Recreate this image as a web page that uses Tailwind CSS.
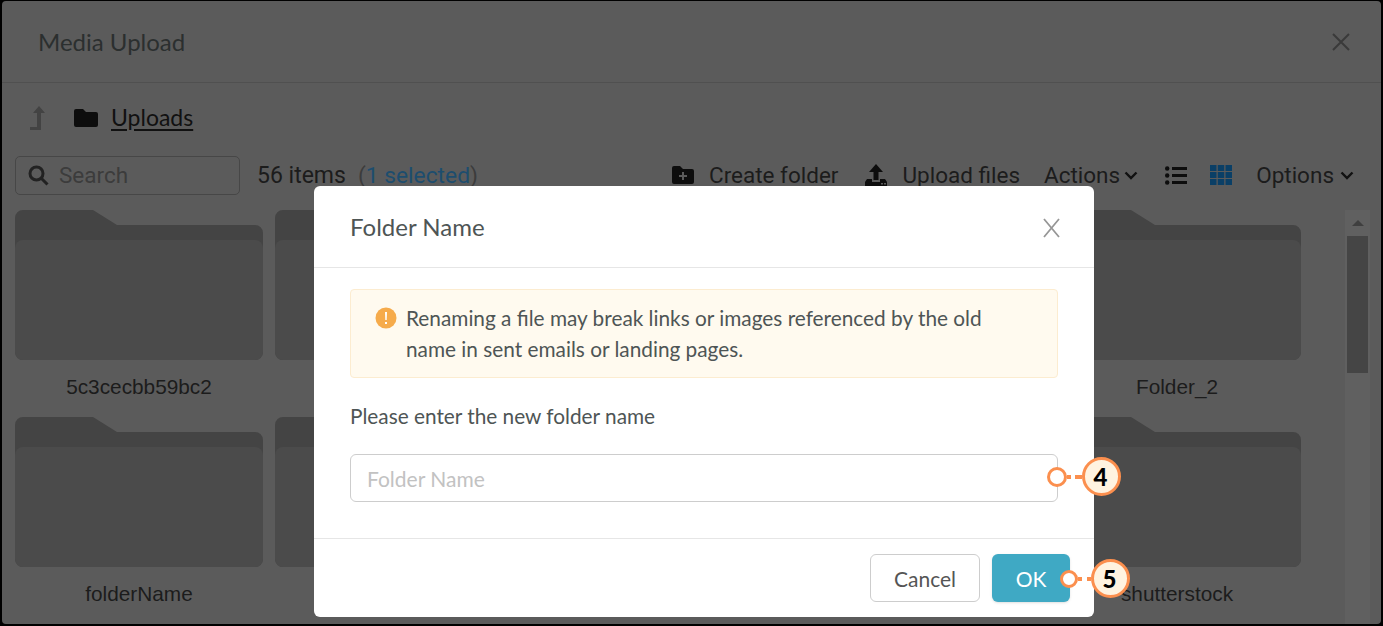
<!DOCTYPE html>
<html lang="en">
<head>
    <meta charset="UTF-8">
    <title>Folder Name</title>
    <script src="https://cdn.jsdelivr.net/npm/@tailwindcss/browser@4"></script>
</head>
<body class="bg-black overflow-hidden">
<div class="relative w-[1383px] h-[626px] overflow-hidden font-['Lato',sans-serif]">

    <!-- media upload window behind the overlay -->
    <div class="absolute inset-x-[2px] top-[1px] bottom-[2px] bg-[#5b5b5b] rounded-[4px] flex flex-col overflow-hidden">
        <div class="h-[82px] shrink-0 flex items-center justify-between pl-[36px] pr-[30px] border-b border-[#505050]">
            <span class="text-[24px] text-[#2b2f2f]">Media Upload</span>
            <svg class="w-[20px] h-[20px]" viewBox="0 0 20 20" fill="none" stroke="#3a3a3a" stroke-width="2"><path d="M2 2l16 16M18 2L2 18"/></svg>
        </div>

        <div class="h-[72px] shrink-0 flex items-center pl-[26px] pb-[2px]">
            <svg class="w-[18px] h-[24px]" viewBox="0 0 18 24" fill="#434343"><path d="M11 0l6 7h-4v17H2v-3h7V7H5z"/></svg>
            <svg class="w-[24px] h-[18px] ml-[28px]" viewBox="0 0 24 18" fill="#0d0d0d"><path d="M2 0h7l3 3h10a2 2 0 012 2v11a2 2 0 01-2 2H2a2 2 0 01-2-2V2a2 2 0 012-2z"/></svg>
            <span class="ml-[13px] -mt-[2px] text-[23px] text-[#111] underline underline-offset-[3px]">Uploads</span>
        </div>

        <div class="h-[40px] shrink-0 flex items-center pl-[13px] pr-[27px] font-['Roboto',sans-serif] text-[22.5px] text-[#1c1c1c]">
            <div class="w-[225px] h-[39px] rounded-[5px] border border-[#474747] flex items-center pl-[12px]">
                <svg class="w-[21px] h-[21px]" viewBox="0 0 21 21" fill="none" stroke="#222" stroke-width="3"><circle cx="8.5" cy="8.5" r="6.5"/><path d="M13.5 13.5l6 6"/></svg>
                <span class="ml-[10px] pt-[2px] text-[#3c3c3c]">Search</span>
            </div>
            <span class="ml-[17px] pt-[2px] text-[23px]">56 items</span>
            <span class="ml-[12px] pt-[2px] text-[22.8px] text-[#3c3c3c]">(<span class="text-[#1d4d6e]">1 selected</span>)</span>
            <div class="ml-auto flex items-center">
                <svg class="w-[22px] h-[18px]" viewBox="0 0 22 18" fill="#0d0d0d"><path d="M2 0h6l3 3h9a2 2 0 012 2v11a2 2 0 01-2 2H2a2 2 0 01-2-2V2a2 2 0 012-2z"/><path d="M10 6h2v3h3v2h-3v3h-2v-3H7V9h3z" fill="#5b5b5b"/></svg>
                <span class="ml-[15px] pt-[2px]">Create folder</span>
                <svg class="w-[22px] h-[22px] ml-[27px]" viewBox="0 0 22 22" fill="#0d0d0d"><path d="M11 0l7 8h-4.500v8h-5V8H4z"/><path d="M0 22v-4l2-3h5v3h8v-3h5l2 3v4z"/><path d="M16 19h2v1.500h-2zM19 19h2v1.500h-2z" fill="#5b5b5b"/></svg>
                <span class="ml-[15px] pt-[2px]">Upload files</span>
                <span class="ml-[24px] pt-[2px]">Actions</span>
                <svg class="w-[14px] h-[9px] ml-[4px]" viewBox="0 0 14 9" fill="none" stroke="#111" stroke-width="2.4"><path d="M1.5 1.5L7 7l5.500-5.500"/></svg>
                <svg class="w-[22px] h-[19px] ml-[27px]" viewBox="0 0 22 19" fill="#0d0d0d"><circle cx="2.200" cy="2.500" r="2.200"/><circle cx="2.200" cy="9.500" r="2.200"/><circle cx="2.200" cy="16.500" r="2.200"/><path d="M7 1h15v3H7zM7 8h15v3H7zM7 15h15v3H7z"/></svg>
                <svg class="w-[22px] h-[20px] ml-[23px]" viewBox="0 0 22 20" fill="#0a3f66"><path d="M0 0h6.500v6H0zM7.750 0h6.500v6h-6.500zM15.500 0H22v6h-6.500zM0 7h6.500v6H0zM7.750 7h6.500v6h-6.500zM15.500 7H22v6h-6.500zM0 14h6.500v6H0zM7.750 14h6.500v6h-6.500zM15.500 14H22v6h-6.500z"/></svg>
                <span class="ml-[24px] pt-[2px]">Options</span>
                <svg class="w-[14px] h-[9px] ml-[6px]" viewBox="0 0 14 9" fill="none" stroke="#111" stroke-width="2.4"><path d="M1.5 1.5L7 7l5.500-5.500"/></svg>
            </div>
        </div>

        <div class="flex-1 flex pl-[13px] pt-[15px] font-['Liberation_Sans',sans-serif] text-[20.8px] text-[#1c1c1c] min-h-0">
            <div class="w-[1286px] grid grid-cols-[repeat(5,248px)] justify-between auto-rows-[207px]">
                <div><svg class="w-[248px] h-[150px]" viewBox="0 0 248 150"><path d="M0 8a8 8 0 018-8h70l24 15h138a8 8 0 018 8v119a8 8 0 01-8 8H8a8 8 0 01-8-8z" fill="#444"/><rect y="30" width="248" height="120" rx="8" fill="#4b4b4b"/></svg><p class="mt-[11px] text-center">5c3cecbb59bc2</p></div>
                <div><svg class="w-[248px] h-[150px]" viewBox="0 0 248 150"><path d="M0 8a8 8 0 018-8h70l24 15h138a8 8 0 018 8v119a8 8 0 01-8 8H8a8 8 0 01-8-8z" fill="#444"/><rect y="30" width="248" height="120" rx="8" fill="#4b4b4b"/></svg></div>
                <div></div>
                <div></div>
                <div><svg class="w-[248px] h-[150px]" viewBox="0 0 248 150"><path d="M0 8a8 8 0 018-8h70l24 15h138a8 8 0 018 8v119a8 8 0 01-8 8H8a8 8 0 01-8-8z" fill="#444"/><rect y="30" width="248" height="120" rx="8" fill="#4b4b4b"/></svg><p class="mt-[11px] text-center">Folder_2</p></div>
                <div><svg class="w-[248px] h-[150px]" viewBox="0 0 248 150"><path d="M0 8a8 8 0 018-8h70l24 15h138a8 8 0 018 8v119a8 8 0 01-8 8H8a8 8 0 01-8-8z" fill="#444"/><rect y="30" width="248" height="120" rx="8" fill="#4b4b4b"/></svg><p class="mt-[11px] text-center">folderName</p></div>
                <div><svg class="w-[248px] h-[150px]" viewBox="0 0 248 150"><path d="M0 8a8 8 0 018-8h70l24 15h138a8 8 0 018 8v119a8 8 0 01-8 8H8a8 8 0 01-8-8z" fill="#444"/><rect y="30" width="248" height="120" rx="8" fill="#4b4b4b"/></svg></div>
                <div></div>
                <div></div>
                <div><svg class="w-[248px] h-[150px]" viewBox="0 0 248 150"><path d="M0 8a8 8 0 018-8h70l24 15h138a8 8 0 018 8v119a8 8 0 01-8 8H8a8 8 0 01-8-8z" fill="#444"/><rect y="30" width="248" height="120" rx="8" fill="#4b4b4b"/></svg><p class="mt-[11px] text-center">shutterstock</p></div>
            </div>
            <!-- scrollbar -->
            <div class="ml-[44px] w-[25px] bg-[#606060] flex flex-col items-center">
                <svg class="w-[12px] h-[26px] shrink-0" viewBox="0 0 12 26" fill="#3f3f3f"><path d="M6 10l6 6H0z"/></svg>
                <div class="w-[21px] h-[137px] bg-[#454545]"></div>
            </div>
        </div>
    </div>

    <!-- dialog -->
    <div class="absolute left-[314px] top-[186px] w-[780px] h-[431px] bg-white rounded-[6px] flex flex-col text-[#4e5555]">
        <div class="h-[82px] shrink-0 flex items-center justify-between pl-[36px] pr-[34px] border-b border-[#e6e6e6]">
            <span class="text-[24px] pt-[1px]">Folder Name</span>
            <svg class="w-[17px] h-[20px] mt-[2px]" viewBox="0 0 17 20" fill="none" stroke="#969696" stroke-width="1.8"><path d="M1 1l15 18M16 1L1 19"/></svg>
        </div>
        <div class="flex-1 px-[36px] pt-[21px]">
            <div class="h-[89px] rounded-[4px] border border-[#fcecd0] bg-[#fffaef] flex pl-[24px] pt-[12px] text-[20.8px] leading-[31px]">
                <svg class="w-[22px] h-[22px] shrink-0 mt-[5px]" viewBox="0 0 22 22"><circle cx="11" cy="11" r="10.500" fill="#f6ab4b"/><path d="M10 5h2l-.3 8h-1.400zM10 15h2v2h-2z" fill="#fff"/></svg>
                <p class="ml-[9px] w-[600px]">Renaming a file may break links or images referenced by the old name in sent emails or landing pages.</p>
            </div>
            <p class="mt-[22px] text-[20.8px] leading-[31px]">Please enter the new folder name</p>
            <div class="mt-[23px] h-[48px] pt-[1px] rounded-[6px] border border-[#cdcdcd] flex items-center pl-[16px] text-[21px] text-[#c2c2c2]">Folder Name</div>
        </div>
        <div class="h-[79px] shrink-0 border-t border-[#e6e6e6] flex items-start justify-end gap-[12px] pt-[15px] pr-[24px] text-[21px]">
            <div class="w-[110px] h-[48px] pt-[1px] rounded-[6px] border border-[#cdcdcd] flex items-center justify-center text-[#555]">Cancel</div>
            <div class="w-[78px] h-[48px] pt-[1px] rounded-[6px] bg-[#3fa9c4] flex items-center justify-center text-white shadow-sm">OK</div>
        </div>
    </div>

    <!-- callouts -->
    <div class="absolute left-[1047px] top-[457px] flex items-center">
        <span class="w-[20px] h-[20px] rounded-full border-[3px] border-[#fb8f4e] bg-white"></span>
        <span class="w-[4px] h-[4px] bg-[#fb8f4e]"></span>
        <span class="w-[4px] h-[4px]"></span>
        <span class="w-[7px] h-[4px] bg-[#fb8f4e]"></span>
        <span class="w-[39px] h-[39px] pr-[2px] rounded-full border-[3px] border-[#fb8f4e] bg-[#fff3e0] flex items-center justify-center text-[24px] font-black text-black">4</span>
    </div>
    <div class="absolute left-[1060px] top-[559px] flex items-center">
        <span class="w-[18px] h-[18px] rounded-full border-[3px] border-[#fb8f4e] bg-white"></span>
        <span class="w-[4px] h-[4px] bg-[#fb8f4e]"></span>
        <span class="w-[5px] h-[4px]"></span>
        <span class="w-[4px] h-[4px] bg-[#fb8f4e]"></span>
        <span class="w-[39px] h-[39px] pr-[2px] rounded-full border-[3px] border-[#fb8f4e] bg-[#fff3e0] flex items-center justify-center text-[24px] font-black text-black">5</span>
    </div>
</div>
</body>
</html>
